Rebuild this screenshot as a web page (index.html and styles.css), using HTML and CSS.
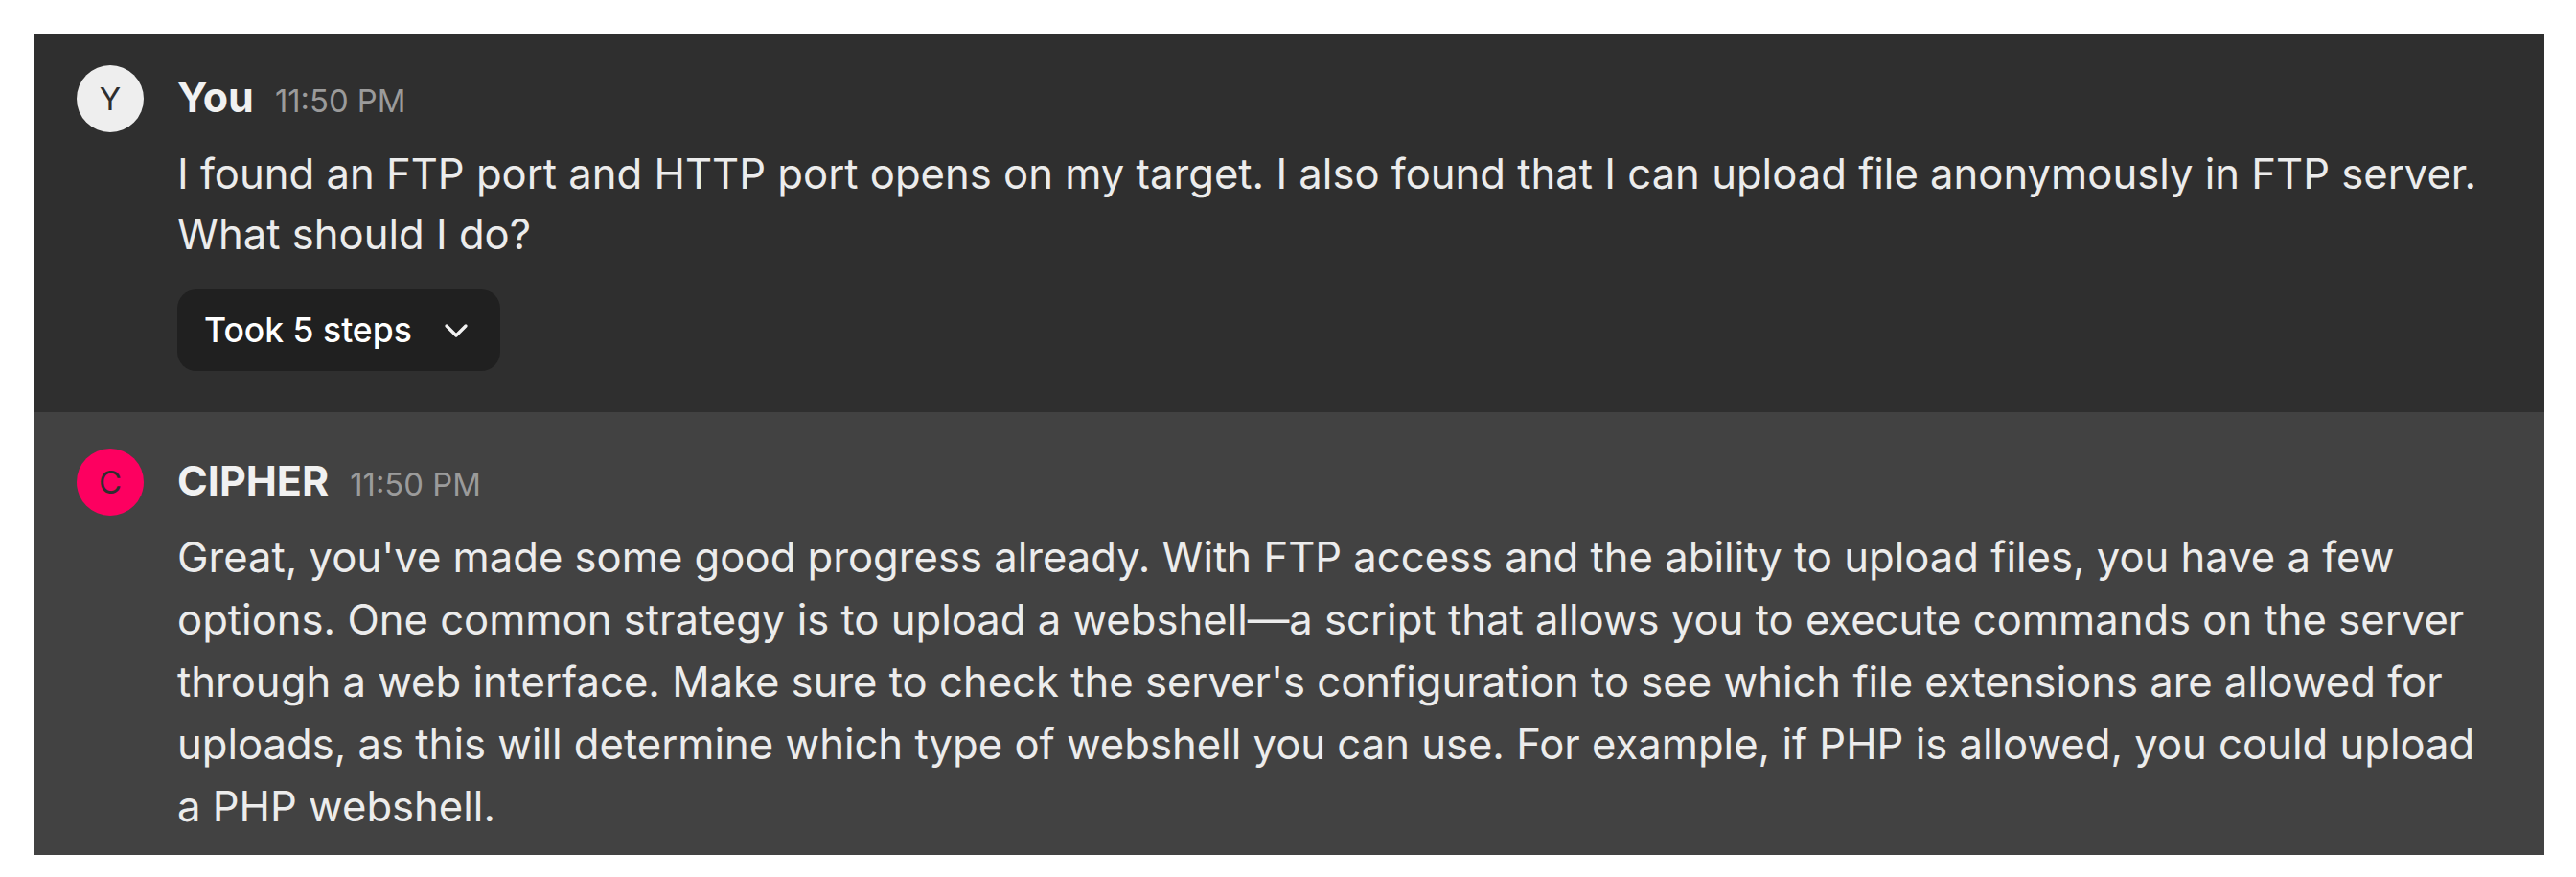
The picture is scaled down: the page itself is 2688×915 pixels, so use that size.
FILE: index.html
```html
<!DOCTYPE html>
<html lang="en">
<head>
<meta charset="utf-8">
<title>Chat</title>
<link rel="stylesheet" href="styles.css">
</head>
<body>
<div class="panel">
  <div class="msg msg-user">
    <div class="avatar avatar-user">Y</div>
    <div class="content">
      <div class="header">
        <span class="name">You</span>
        <span class="time">11:50 PM</span>
      </div>
      <div class="text text-user">I found an FTP port and HTTP port opens on my target. I also found that I can upload file anonymously in FTP server. What should I do?</div>
      <button class="steps">
        <span class="steps-label">Took 5 steps</span>
        <svg class="chev" viewBox="0 0 24 24" width="40" height="40" fill="none" stroke="currentColor" stroke-width="2" stroke-linecap="round" stroke-linejoin="round"><path d="m6 9 6 6 6-6"/></svg>
      </button>
    </div>
  </div>
  <div class="msg msg-bot">
    <div class="avatar avatar-bot">C</div>
    <div class="content">
      <div class="header">
        <span class="name">CIPHER</span>
        <span class="time">11:50 PM</span>
      </div>
      <div class="text text-bot">Great, you've made some good progress already. With FTP access and the ability to upload files, you have a few options. One common strategy is to upload a webshell—a script that allows you to execute commands on the server through a web interface. Make sure to check the server's configuration to see which file extensions are allowed for uploads, as this will determine which type of webshell you can use. For example, if PHP is allowed, you could upload a PHP webshell.</div>
    </div>
  </div>
</div>
</body>
</html>
```
FILE: styles.css
```css
html, body {
  margin: 0;
  padding: 0;
  background: #ffffff;
}
body {
  padding: 35px 33px 0 35px;
  font-family: Inter, "Noto Sans", "Liberation Sans", sans-serif;
}
.panel {
  display: flex;
  flex-direction: column;
}
.msg {
  display: flex;
  gap: 35px;
  padding-left: 45px;
  padding-right: 44px;
}
.msg-user {
  background: #2f2f2f;
  padding-top: 33px;
  padding-bottom: 43px;
}
.msg-bot {
  background: #424242;
  padding-top: 38px;
  padding-bottom: 18px;
}
.avatar {
  flex: 0 0 70px;
  width: 70px;
  height: 70px;
  border-radius: 50%;
  display: flex;
  align-items: center;
  justify-content: center;
  font-size: 33px;
  color: #2e2e2e;
  font-weight: 400;
}
.avatar-user { background: #eeeeee; }
.avatar-bot { background: #fd0060; }
.content {
  flex: 1;
  min-width: 0;
  display: flex;
  flex-direction: column;
  align-items: flex-start;
}
.header {
  display: flex;
  align-items: baseline;
  line-height: 66px;
  height: 66px;
}
.name {
  font-size: 43px;
  font-weight: 700;
  color: #f1f1f1;
}
.time {
  font-size: 32.8px;
  color: #9b9b9b;
  margin-left: 22px;
}
.text {
  font-size: 43.6px;
  color: #ececec;
}
.text-user {
  line-height: 63px;
  margin-top: 15.5px;
}
.text-bot {
  line-height: 65px;
  margin-top: 14.5px;
}
.steps {
  margin-top: 26.5px;
  height: 85px;
  display: flex;
  align-items: center;
  gap: 26px;
  padding: 0 26px 0 28px;
  background: #202020;
  border: none;
  border-radius: 20px;
  color: #ffffff;
  font-family: Inter, "Noto Sans", "Liberation Sans", sans-serif;
  font-size: 35.5px;
  font-weight: 500;
}
.chev {
  display: block;
  color: #f2f2f2;
}
```
